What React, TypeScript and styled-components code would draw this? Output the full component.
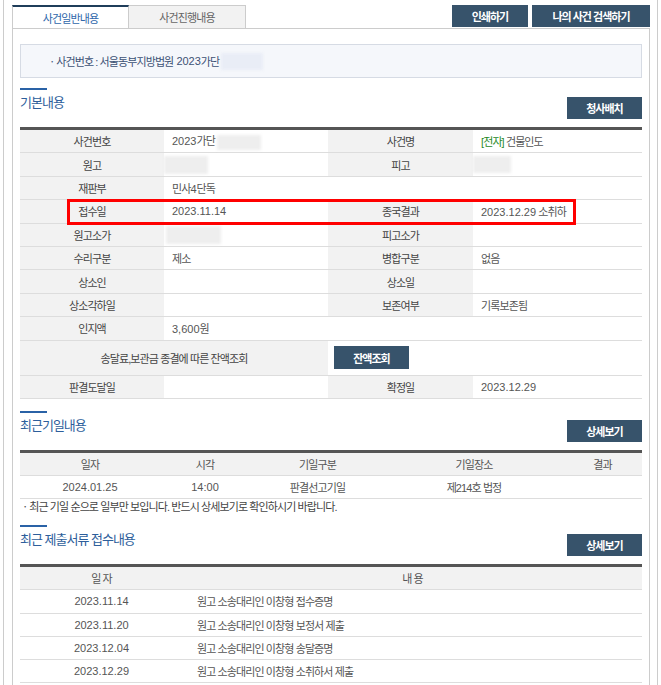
import React from 'react'
import styled, { createGlobalStyle } from 'styled-components'

const GlobalStyle = createGlobalStyle`
  body {
    margin: 0;
    background: #fff;
    font-family: 'Liberation Sans', 'Noto Sans CJK KR', sans-serif;
    font-size: 11px;
    letter-spacing: -0.9px;
    color: #555;
  }
`

const Frame = styled.div`
  box-sizing: border-box;
  width: 655px;
  height: 685px;
  margin-left: 3px;
  padding: 5px 7px 0 8px;
  border-left: 1px solid #ccc;
  border-right: 1px solid #ccc;
  overflow: hidden;
`

const TopBar = styled.div`
  display: flex;
  justify-content: space-between;
  align-items: flex-start;
  height: 23px;
`

const Tabs = styled.div`
  display: flex;
`

const Tab = styled.div<{ $active?: boolean }>`
  box-sizing: border-box;
  width: 117px;
  height: 23px;
  display: flex;
  align-items: center;
  justify-content: center;
  border: 1px solid #ccc;
  border-bottom: none;
  ${(p) =>
    p.$active
      ? `background: #fff; border-top: 2px solid #1f3d5a; color: #2f67ab;`
      : `background: #f2f2f2; border-left: none; color: #666;`}
`

const Actions = styled.div`
  display: flex;
  gap: 4px;
`

const DarkButton = styled.button<{ $w?: number; $h?: number }>`
  box-sizing: border-box;
  width: ${(p) => p.$w || 75}px;
  height: ${(p) => p.$h || 22}px;
  border: none;
  padding: 0;
  background: #37536b;
  color: #fff;
  font-family: inherit;
  font-size: 11px;
  font-weight: bold;
  letter-spacing: -1px;
`

const Panel = styled.div`
  border: 1px solid #ccc;
  border-bottom: none;
  padding: 15px 7px 0;
  min-height: 700px;
`

const InfoBox = styled.div`
  box-sizing: border-box;
  height: 34px;
  display: flex;
  align-items: center;
  padding-left: 26px;
  background: #f5f7fb;
  border: 1px solid #d6dbe4;
  color: #3d5275;
`

const Blur = styled.span<{ $w: number; $h?: number; $tone?: string }>`
  display: inline-block;
  width: ${(p) => p.$w}px;
  height: ${(p) => p.$h || 15}px;
  background: ${(p) => p.$tone || '#eeeeee'};
  filter: blur(1.5px);
  vertical-align: middle;
`

const SectionHead = styled.div<{ $top: number }>`
  display: flex;
  justify-content: space-between;
  align-items: flex-start;
  margin: ${(p) => p.$top}px 0 8px;
`

const Title = styled.h3`
  margin: 0;
  font-size: 13px;
  font-weight: normal;
  line-height: 16px;
  letter-spacing: -1px;
  color: #2d5e9b;
  &::before {
    content: '';
    display: block;
    width: 27px;
    height: 2px;
    margin-bottom: 5px;
    background: #2a62a6;
  }
`

const HeadButton = styled(DarkButton)`
  margin-top: 9px;
`

const TableWrap = styled.div`
  position: relative;
`

const Table = styled.table`
  width: 100%;
  border-collapse: collapse;
  table-layout: fixed;
  border-top: 3px solid #555;
`

const Label = styled.th<{ $h?: number }>`
  height: ${(p) => p.$h || 22.4}px;
  padding: 0;
  background: #f2f2f2;
  color: #444;
  font-weight: normal;
  text-align: center;
  border-bottom: 1px solid #ddd;
`

const Value = styled.td`
  height: 22.4px;
  padding: 0 0 0 8px;
  color: #555;
  border-bottom: 1px solid #ddd;
`

const ButtonCell = styled.td`
  padding: 0 0 0 6px;
  border-bottom: 1px solid #ddd;
`

const Num = styled.span`
  letter-spacing: 0;
`

const Green = styled.span`
  color: #1f8a1f;
`

const RedBox = styled.div`
  position: absolute;
  left: 47px;
  top: 72px;
  width: 509px;
  height: 26px;
  box-sizing: border-box;
  border: 3px solid #f00;
  pointer-events: none;
`

const HeadCell = styled.th<{ $w?: number }>`
  width: ${(p) => (p.$w ? `${p.$w}px` : 'auto')};
  height: 22px;
  padding: 0;
  background: #f2f2f2;
  color: #555;
  font-weight: normal;
  text-align: center;
  border-bottom: 1px solid #ddd;
`

const Cell = styled.td<{ $left?: boolean }>`
  height: 22.3px;
  padding: ${(p) => (p.$left ? '0 0 0 14px' : '0')};
  text-align: ${(p) => (p.$left ? 'left' : 'center')};
  color: #555;
  border-bottom: 1px solid #ddd;
`

const Note = styled.p`
  margin: 1px 0 0;
  line-height: 14px;
  color: #444;
`

const hearings = [
  { date: '2024.01.25', time: '14:00', kind: '판결선고기일', place: '제214호 법정', result: '' },
]

const documents = [
  { date: '2023.11.14', text: '원고 소송대리인 이창형 접수증명' },
  { date: '2023.11.20', text: '원고 소송대리인 이창형 보정서 제출' },
  { date: '2023.12.04', text: '원고 소송대리인 이창형 송달증명' },
  { date: '2023.12.29', text: '원고 소송대리인 이창형 소취하서 제출' },
]

export default function App() {
  return (
    <>
      <GlobalStyle />
      <Frame>
        <TopBar>
          <Tabs>
            <Tab $active>사건일반내용</Tab>
            <Tab>사건진행내용</Tab>
          </Tabs>
          <Actions>
            <DarkButton $w={76}>인쇄하기</DarkButton>
            <DarkButton $w={118}>나의 사건 검색하기</DarkButton>
          </Actions>
        </TopBar>
        <Panel>
          <InfoBox>
            ㆍ사건번호 : 서울동부지방법원 <Num>&nbsp;2023</Num>가단&nbsp;
            <Blur $w={42} $h={17} $tone="#e9edf6" />
          </InfoBox>

          <SectionHead $top={10}>
            <Title>기본내용</Title>
            <HeadButton>청사배치</HeadButton>
          </SectionHead>
          <TableWrap>
            <Table>
              <colgroup>
                <col style={{ width: 144 }} />
                <col style={{ width: 164 }} />
                <col style={{ width: 145 }} />
                <col />
              </colgroup>
              <tbody>
                <tr>
                  <Label>사건번호</Label>
                  <Value>
                    <Num>2023</Num>가단 <Blur $w={44} />
                  </Value>
                  <Label>사건명</Label>
                  <Value>
                    <Green>[전자]</Green> 건물인도
                  </Value>
                </tr>
                <tr>
                  <Label>원고</Label>
                  <Value style={{ paddingLeft: 0 }}>
                    <Blur $w={44} $h={18} />
                  </Value>
                  <Label>피고</Label>
                  <Value style={{ paddingLeft: 0 }}>
                    <Blur $w={38} $h={17} />
                  </Value>
                </tr>
                <tr>
                  <Label>재판부</Label>
                  <Value colSpan={3}>
                    민사<Num>4</Num>단독
                  </Value>
                </tr>
                <tr>
                  <Label>접수일</Label>
                  <Value>
                    <Num>2023.11.14</Num>
                  </Value>
                  <Label>종국결과</Label>
                  <Value>
                    <Num>2023.12.29</Num> 소취하
                  </Value>
                </tr>
                <tr>
                  <Label>원고소가</Label>
                  <Value style={{ paddingLeft: 2 }}>
                    <Blur $w={55} $h={18} />
                  </Value>
                  <Label>피고소가</Label>
                  <Value />
                </tr>
                <tr>
                  <Label>수리구분</Label>
                  <Value>제소</Value>
                  <Label>병합구분</Label>
                  <Value>없음</Value>
                </tr>
                <tr>
                  <Label>상소인</Label>
                  <Value />
                  <Label>상소일</Label>
                  <Value />
                </tr>
                <tr>
                  <Label>상소각하일</Label>
                  <Value />
                  <Label>보존여부</Label>
                  <Value>기록보존됨</Value>
                </tr>
                <tr>
                  <Label>인지액</Label>
                  <Value colSpan={3}>
                    <Num>3,600</Num>원
                  </Value>
                </tr>
                <tr>
                  <Label colSpan={2} $h={34}>
                    송달료,보관금 종결에 따른 잔액조회
                  </Label>
                  <ButtonCell colSpan={2}>
                    <DarkButton $h={23}>잔액조회</DarkButton>
                  </ButtonCell>
                </tr>
                <tr>
                  <Label>판결도달일</Label>
                  <Value />
                  <Label>확정일</Label>
                  <Value>
                    <Num>2023.12.29</Num>
                  </Value>
                </tr>
              </tbody>
            </Table>
            <RedBox />
          </TableWrap>

          <SectionHead $top={12}>
            <Title>최근기일내용</Title>
            <HeadButton>상세보기</HeadButton>
          </SectionHead>
          <Table>
            <thead>
              <tr>
                <HeadCell $w={140}>일자</HeadCell>
                <HeadCell $w={90}>시각</HeadCell>
                <HeadCell $w={135}>기일구분</HeadCell>
                <HeadCell $w={178}>기일장소</HeadCell>
                <HeadCell>결과</HeadCell>
              </tr>
            </thead>
            <tbody>
              {hearings.map((h) => (
                <tr key={h.date}>
                  <Cell>
                    <Num>{h.date}</Num>
                  </Cell>
                  <Cell>
                    <Num>{h.time}</Num>
                  </Cell>
                  <Cell>{h.kind}</Cell>
                  <Cell>{h.place}</Cell>
                  <Cell>{h.result}</Cell>
                </tr>
              ))}
            </tbody>
          </Table>
          <Note>ㆍ최근 기일 순으로 일부만 보입니다. 반드시 상세보기로 확인하시기 바랍니다.</Note>

          <SectionHead $top={11}>
            <Title>최근 제출서류 접수내용</Title>
            <HeadButton>상세보기</HeadButton>
          </SectionHead>
          <Table>
            <thead>
              <tr>
                <HeadCell $w={163}>일 자</HeadCell>
                <HeadCell>내 용</HeadCell>
              </tr>
            </thead>
            <tbody>
              {documents.map((d) => (
                <tr key={d.date}>
                  <Cell>
                    <Num>{d.date}</Num>
                  </Cell>
                  <Cell $left>{d.text}</Cell>
                </tr>
              ))}
            </tbody>
          </Table>
        </Panel>
      </Frame>
    </>
  )
}
